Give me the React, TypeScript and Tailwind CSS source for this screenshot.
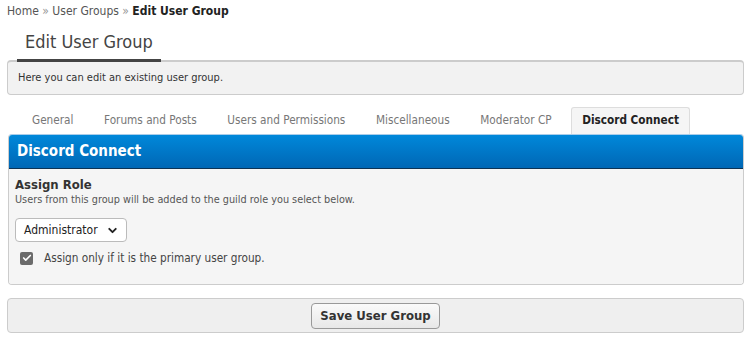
import { Check, ChevronDown } from 'lucide-react';

const font = { fontFamily: '"DejaVu Sans Condensed", "DejaVu Sans", Tahoma, sans-serif' };

const tabs = ['General', 'Forums and Posts', 'Users and Permissions', 'Miscellaneous', 'Moderator CP'];

export default function App() {
  return (
    <div className="min-h-[343px] w-[751px] bg-white px-[7px] pt-[3px]" style={font}>
      {/* breadcrumb */}
      <div className="h-[16px] text-[12px] leading-[16px] text-[#555]">
        Home <span className="text-[#999]">»</span> User Groups <span className="text-[#999]">»</span>{' '}
        <span className="font-bold text-[#222]">Edit User Group</span>
      </div>

      {/* page title */}
      <div className="mt-[12px] ml-[10px] inline-block border-b-[3px] border-[#444] px-[8px] pb-[6px] text-[18px] leading-[22px] text-[#444]">
        Edit User Group
      </div>
      <div className="-mt-[2px] h-[35px] rounded-[4px] border border-t-[2px] border-[#ccc] bg-[#f2f2f2] px-[10px] text-[11px] leading-[31px] text-[#333]">
        Here you can edit an existing user group.
      </div>

      {/* tabs */}
      <div className="mt-[11px] ml-[14px] flex h-[28px] items-end gap-[8.6px]">
        {tabs.map((t) => (
          <div key={t} className="px-[11px] pb-[6px] text-[11.7px] leading-[16px] text-[#777]">
            {t}
          </div>
        ))}
        <div className="rounded-t-[3px] border border-b-0 border-[#ddd] bg-[#f5f5f5] px-[10px] pt-[4px] pb-[6px] text-[11.7px] font-bold leading-[16px] text-[#222]">
          Discord Connect
        </div>
      </div>

      {/* panel */}
      <div className="ml-[1px] overflow-hidden rounded-[4px] border border-[#ccc] border-t-[#a9cdea]">
        <div className="h-[34px] border-b border-[#0d3253] bg-gradient-to-b from-[#0088da] to-[#0067b5] px-[8px] text-[15px] font-bold leading-[33px] text-white">
          Discord Connect
        </div>
        <div className="bg-[#f5f5f5] px-[6px] pt-[8px] pb-[18px]">
          <div className="text-[13px] font-bold leading-[16px] text-[#333]">Assign Role</div>
          <div className="text-[10.8px] leading-[13px] text-[#555]">
            Users from this group will be added to the guild role you select below.
          </div>
          <div className="mt-[12px] flex h-[24px] w-[112px] items-center justify-between rounded-[4px] border border-[#bbb] bg-white pl-[8px] pr-[7px] text-[12px] text-[#222]">
            Administrator
            <ChevronDown size={13} strokeWidth={3.5} className="text-[#222]" />
          </div>
          <div className="mt-[8px] flex items-center gap-[11px] pl-[5px]">
            <span className="flex h-[13px] w-[13px] items-center justify-center rounded-[2px] bg-[#6b6b6b]">
              <Check size={10} strokeWidth={4} className="text-white" />
            </span>
            <span className="text-[11.7px] leading-[16px] text-[#444]">Assign only if it is the primary user group.</span>
          </div>
        </div>
      </div>

      {/* save bar */}
      <div className="mt-[13px] flex h-[35px] items-center justify-center rounded-[4px] border border-[#ccc] bg-[#efefef]">
        <button
          type="button"
          className="h-[26px] rounded-[4px] border border-[#999] bg-gradient-to-b from-[#fafafa] to-[#e8e8e8] px-[8px] text-[13px] font-bold text-[#333]"
        >
          Save User Group
        </button>
      </div>
    </div>
  );
}
